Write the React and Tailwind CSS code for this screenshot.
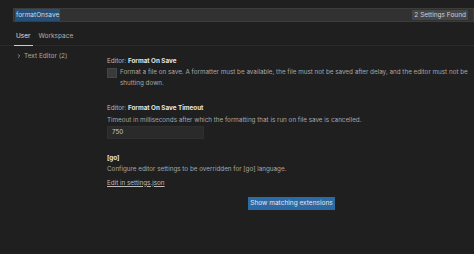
import { ChevronRight } from "lucide-react";

export default function App() {
  return (
    <div
      className="w-[474px] h-[254px] overflow-hidden bg-[#1f1f1f] text-[#cccccc]"
      style={{ fontFamily: "Inter, 'Open Sans', sans-serif" }}
    >
      {/* search */}
      <div className="pl-[13px] pt-[8px]">
        <div className="h-[14px] bg-[#313131] border border-[#3c3c3c] flex items-center pl-[1px] pr-[5px]">
          <span className="bg-[#264f78] text-[#d8d8d8] text-[6.5px] leading-[12px] px-[1px]">formatOnsave</span>
          <div className="flex-1" />
          <span className="bg-[#454545] text-[#d0d0d0] text-[6.5px] leading-[10px] px-[2px]">2 Settings Found</span>
        </div>
      </div>

      {/* tabs */}
      <div className="flex gap-[6px] px-[14px] mt-[10px] border-b border-[#2b2b2b] text-[6.5px]">
        <div className="text-[#e0e0e0] pb-[3px] border-b border-[#cccccc] px-[2px] -mb-px">User</div>
        <div className="text-[#b0b0b0] pb-[3px]">Workspace</div>
      </div>

      <div className="flex">
        {/* tree */}
        <div className="w-[107px] pl-[16px] pt-[6px] text-[6.5px] text-[#a8a8a8] flex items-start">
          <ChevronRight className="w-[6px] h-[6px] mr-[2px] mt-[1px]" strokeWidth={3} />
          <span>Text Editor (2)</span>
        </div>

        {/* settings */}
        <div className="flex-1 pt-[11px] pr-[4px] text-[6.3px]">
          <div className="mb-[15px]">
            <div className="leading-[9px]">
              <span className="text-[#bdbdbd]">Editor: </span>
              <span className="font-bold text-[#e5e5e5]">Format On Save</span>
            </div>
            <div className="flex mt-[1px]">
              <div className="w-[10px] h-[10px] bg-[#3a3a3a] border border-[#454545] shrink-0 mr-[3px] mt-[1px]" />
              <div className="leading-[11px] text-[#a8a8a8]">
                Format a file on save. A formatter must be available, the file must not be saved after delay, and the editor must not be shutting down.
              </div>
            </div>
          </div>

          <div className="mb-[15px]">
            <div className="leading-[9px]">
              <span className="text-[#bdbdbd]">Editor: </span>
              <span className="font-bold text-[#e5e5e5]">Format On Save Timeout</span>
            </div>
            <div className="leading-[11px] text-[#a8a8a8] mt-[2px]">
              Timeout in milliseconds after which the formatting that is run on file save is cancelled.
            </div>
            <div className="w-[97px] h-[13px] bg-[#2a2a2a] border border-[#2f2f2f] pl-[4px] leading-[11px] text-[#cccccc]">
              750
            </div>
          </div>

          <div>
            <div className="font-bold text-[#e5e5e5] leading-[9px]">[go]</div>
            <div className="leading-[11px] text-[#a8a8a8] mt-[1px]">
              Configure editor settings to be overridden for [go] language.
            </div>
            <div className="underline text-[#bdbdbd] leading-[11px] mt-[3px]">Edit in settings.json</div>
          </div>

          <div className="mt-[8px] pl-[141px]">
            <button className="w-[87px] h-[13px] bg-[#2c6aa6] text-[#e6e6e6] text-[6.5px] leading-[13px]">
              Show matching extensions
            </button>
          </div>
        </div>
      </div>
    </div>
  );
}
